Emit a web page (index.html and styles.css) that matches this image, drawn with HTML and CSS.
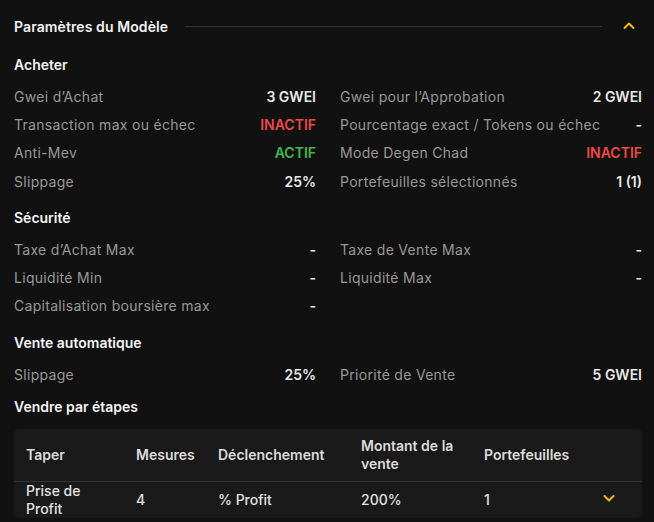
FILE: index.html
```html
<!DOCTYPE html>
<html>
<head>
<title>Paramètres du Modèle</title>
<meta name="viewport" content="width=device-width, initial-scale=1">
<link rel="stylesheet" href="styles.css">
</head>
<body>

<div class="panel">
  <div class="panel-head">
    <span class="panel-title">Paramètres du Modèle</span>
    <span class="rule"></span>
    <svg class="chev" width="14" height="14" viewBox="0 0 14 14"><path d="M2.5 9L7 4.5L11.5 9" fill="none" stroke="#f0b90b" stroke-width="2" stroke-linecap="round" stroke-linejoin="round"/></svg>
  </div>

  <!-- acheter -->
  <div class="sec-title first">Acheter</div>
  <div class="grid">
    <div class="row"><span class="lbl">Gwei d’Achat</span><span class="val">3 GWEI</span></div>
    <div class="row"><span class="lbl">Gwei pour l’Approbation</span><span class="val">2 GWEI</span></div>
    <div class="row"><span class="lbl">Transaction max ou échec</span><span class="val off">INACTIF</span></div>
    <div class="row"><span class="lbl">Pourcentage exact / Tokens ou échec</span><span class="val">-</span></div>
    <div class="row"><span class="lbl">Anti-Mev</span><span class="val on">ACTIF</span></div>
    <div class="row"><span class="lbl">Mode Degen Chad</span><span class="val off">INACTIF</span></div>
    <div class="row"><span class="lbl">Slippage</span><span class="val">25%</span></div>
    <div class="row"><span class="lbl">Portefeuilles sélectionnés</span><span class="val">1 (1)</span></div>
  </div>

  <!-- securite -->
  <div class="sec-title">Sécurité</div>
  <div class="grid">
    <div class="row"><span class="lbl">Taxe d’Achat Max</span><span class="val">-</span></div>
    <div class="row"><span class="lbl">Taxe de Vente Max</span><span class="val">-</span></div>
    <div class="row"><span class="lbl">Liquidité Min</span><span class="val">-</span></div>
    <div class="row"><span class="lbl">Liquidité Max</span><span class="val">-</span></div>
    <div class="row"><span class="lbl">Capitalisation boursière max</span><span class="val">-</span></div>
  </div>

  <!-- vente auto -->
  <div class="sec-title">Vente automatique</div>
  <div class="grid">
    <div class="row"><span class="lbl">Slippage</span><span class="val">25%</span></div>
    <div class="row"><span class="lbl">Priorité de Vente</span><span class="val">5 GWEI</span></div>
  </div>

  <div class="sec-title steps">Vendre par étapes</div>
  <div class="steps-table">
    <div class="t-row t-head">
      <div class="c c1">Taper</div>
      <div class="c">Mesures</div>
      <div class="c">Déclenchement</div>
      <div class="c c4">Montant de la vente</div>
      <div class="c">Portefeuilles</div>
      <div class="c"></div>
    </div>
    <div class="t-row t-body">
      <div class="c c1">Prise de Profit</div>
      <div class="c">4</div>
      <div class="c">% Profit</div>
      <div class="c c4">200%</div>
      <div class="c">1</div>
      <div class="c"><svg width="14" height="14" viewBox="0 0 14 14"><path d="M2.5 5L7 9.5L11.5 5" fill="none" stroke="#f0b90b" stroke-width="2" stroke-linecap="round" stroke-linejoin="round"/></svg></div>
    </div>
  </div>
</div>

</body>
</html>
```

FILE: styles.css
```css
body {
  margin: 0;
  background-color: #111111;
  font-family: Inter, "Noto Sans", sans-serif;
  font-size: 14px;
  color: #e6e6e6;
}

.panel {
  padding: 16px 12px 0 14px;
}

.panel-head {
  display: flex;
  align-items: center;
  height: 20px;
}

.panel-title {
  font-weight: 600;
  color: #f2f2f2;
  letter-spacing: 0.1px;
}

.rule {
  flex: 1;
  height: 1px;
  background-color: #333;
  margin: 0 20px 0 17px;
}

.chev {
  margin-right: 6px;
}

.sec-title {
  font-weight: 600;
  color: #f4f4f4;
  height: 28px;
  line-height: 28px;
  margin-top: 9px;
  margin-bottom: 3px;
}

.sec-title.first {
  margin-top: 15px;
}

.sec-title.steps {
  margin-top: 5px;
  margin-bottom: 0;
}

.grid {
  display: grid;
  grid-template-columns: 1fr 1fr;
  column-gap: 24px;
}

.row {
  display: flex;
  justify-content: space-between;
  align-items: center;
  height: 28.3px;
}

.lbl {
  color: #989898;
  letter-spacing: 0.3px;
}

.val {
  font-weight: 600;
  color: #e8e8e8;
}

.val.off {
  color: #ef4747;
}

.val.on {
  color: #45b649;
}

/* table */
.steps-table {
  margin-top: 8px;
  background-color: #1a1a1a;
  border-radius: 5px;
}

.t-row {
  display: grid;
  grid-template-columns: 110px 82px 143px 123px 1fr 40px;
  align-items: center;
  padding-left: 12px;
}

.t-head {
  height: 52px;
  border-bottom: 1px solid #333;
  font-weight: 600;
  color: #dcdcdc;
}

.t-body {
  height: 36px;
  font-weight: 500;
  color: #e2e2e2;
}

.c {
  line-height: 18px;
}

.c1 {
  padding-right: 40px;
}

.c4 {
  padding-right: 14px;
}
```
